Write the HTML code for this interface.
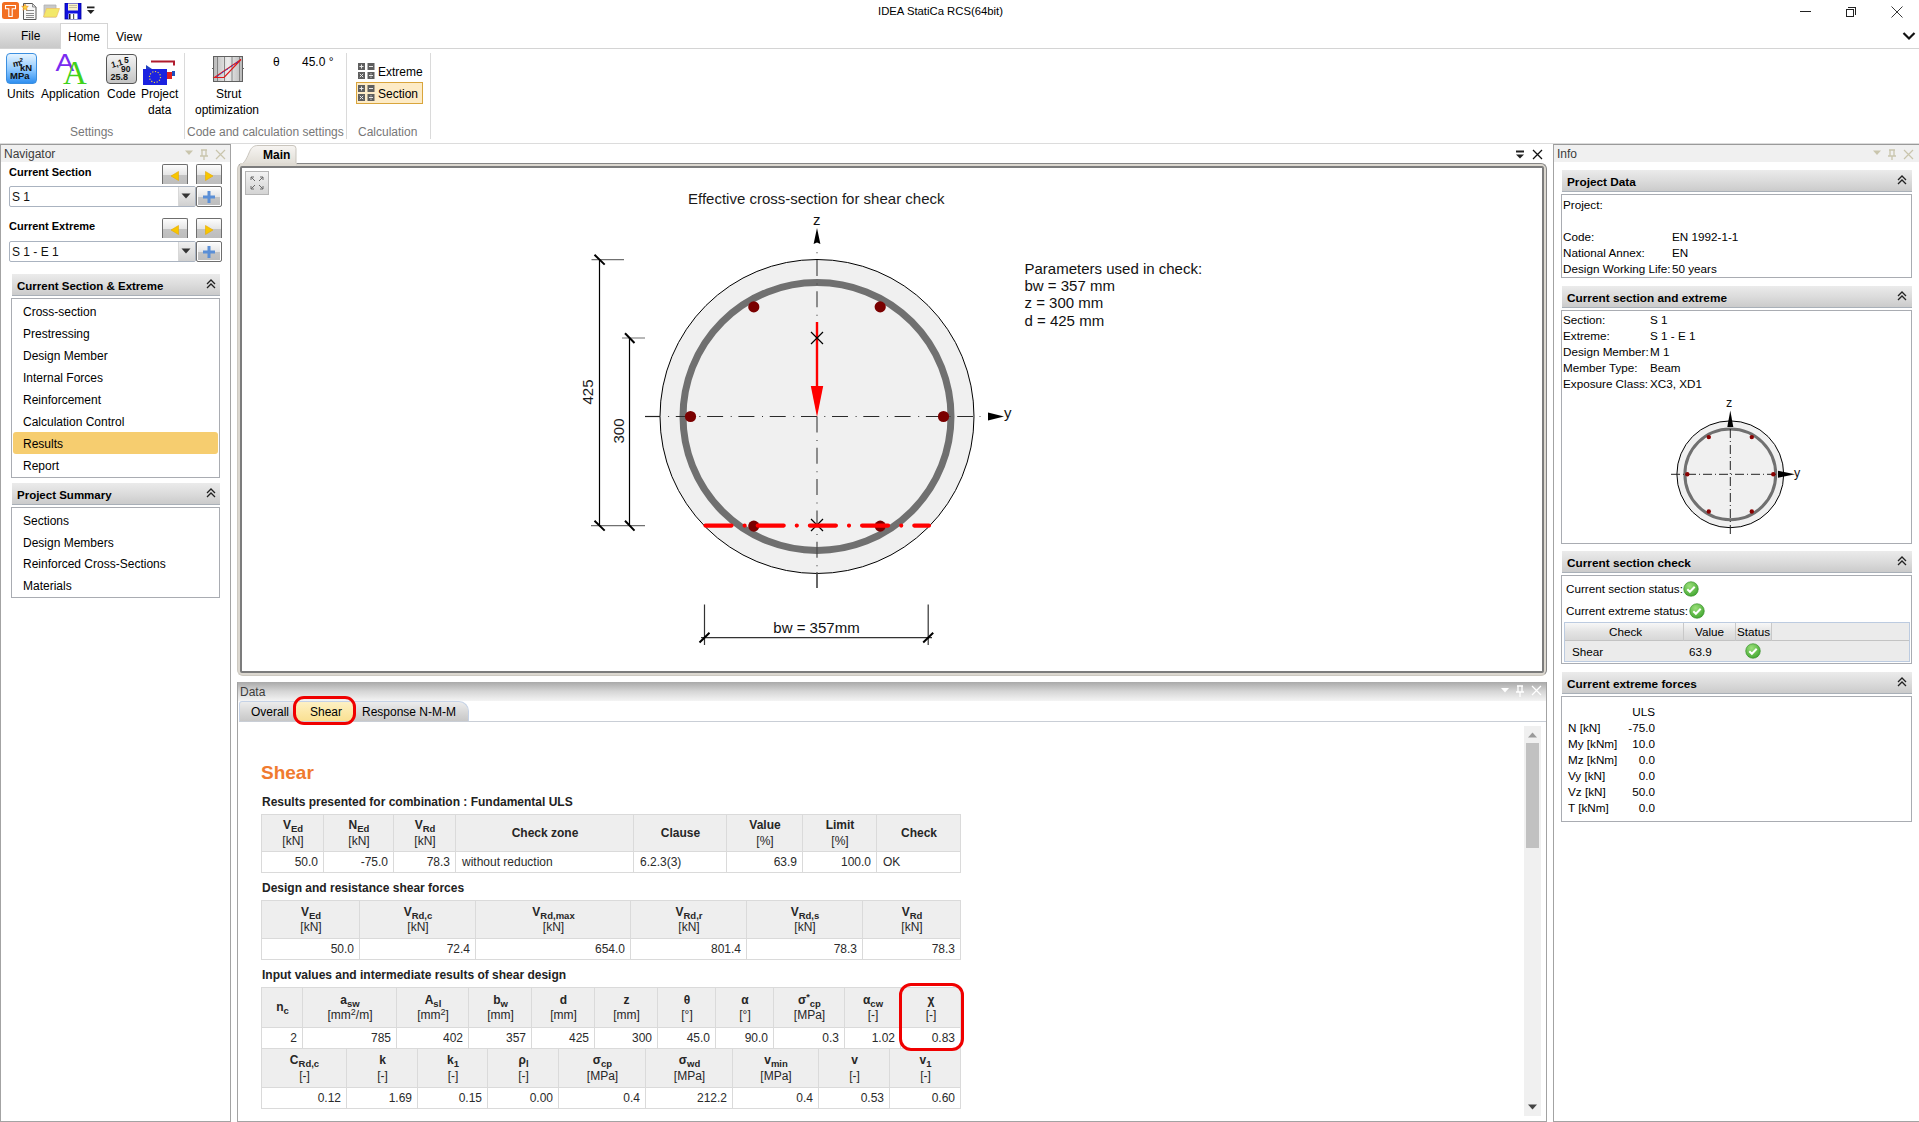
<!DOCTYPE html>
<html><head><meta charset="utf-8">
<style>
*{box-sizing:border-box}
html,body{margin:0;padding:0}
body{width:1919px;height:1122px;position:relative;overflow:hidden;background:#fff;font-family:"Liberation Sans",sans-serif;font-size:12px;color:#000}
.a{position:absolute}
.t{position:absolute;white-space:nowrap;line-height:16px}
.b{font-weight:bold}
.hdr{position:absolute;height:22px;background:linear-gradient(#ececec,#dadada 55%,#c8c8c8);border-bottom:2px solid #b9b9b9}
.hdr .t{top:3px;left:5px;font-weight:bold;font-size:11.5px}
.box{position:absolute;border:1px solid #a9acb2;border-radius:2px;background:#fff}
.rep{font-family:"Liberation Sans",sans-serif}
table.r{position:absolute;border-collapse:collapse;font-size:12px;color:#222}
table.r td{border:1px solid #d9d9d9;padding:0 4px;height:20px;text-align:right}
table.r tr.h td{background:#ededed;text-align:center;font-weight:bold;line-height:13px;height:37px;color:#111}
table.r tr.h td span{font-weight:normal}
sub{font-size:9.5px;vertical-align:-3px;line-height:0}
sup{font-size:9px;vertical-align:4px;line-height:0}
.hc{display:flex;flex-direction:column;justify-content:center;align-items:center;text-align:center;font-size:12px;line-height:15.5px;color:#262626}
.hc b{font-weight:bold}
.hc .u{font-weight:normal}
.vc{font-size:12px;line-height:23px;padding:0 6px;color:#2a2a2a;white-space:nowrap}
</style></head>
<body>
<!-- TITLE BAR -->
<div class="t" style="left:878px;top:3px;font-size:11.3px">IDEA StatiCa RCS(64bit)</div>

<!-- RIBBON TABS -->
<div class="a" style="left:0;top:23px;width:60px;height:25px;background:linear-gradient(#ececec,#c9c9c9)"></div>
<div class="t" style="left:21px;top:28px">File</div>
<div class="a" style="left:60px;top:23px;width:48px;height:26px;background:#fff;border:1px solid #d4d4d4;border-bottom:none"></div>
<div class="t" style="left:68px;top:29px">Home</div>
<div class="t" style="left:116px;top:29px">View</div>
<div class="a" style="left:0;top:48px;width:60px;height:1px;background:#d4d4d4"></div>
<div class="a" style="left:107px;top:48px;width:1812px;height:1px;background:#d4d4d4"></div>
<div class="a" style="left:0;top:143px;width:1919px;height:1px;background:#dcdcdc"></div>


<!-- quick access icons -->
<svg class="a" style="left:1px;top:1px" width="20" height="19"><rect x="1" y="1" width="17" height="17" rx="2.5" fill="#f26f22"/><path d="M4.5 4.5h10v3.2h-3.3v7.8h-3.4v-7.8h-3.3z" fill="none" stroke="#fff" stroke-width="1.1"/></svg>
<svg class="a" style="left:20px;top:2px" width="19" height="18"><path d="M3.5 1.5h9l3.5 3.5v12.5h-12.5z" fill="#f8f8f8" stroke="#555"/><path d="M12.5 1.5v3.5h3.5z" fill="#ddd" stroke="#777" stroke-width="0.8"/><path d="M6 8.5h8M6 11.5h8M6 13.5h8M6 15.5h8" stroke="#8a8a8a" stroke-width="1"/><path d="M5 2l1 2.2 2.3.2-1.8 1.5.6 2.3-2.1-1.3-2.1 1.3.6-2.3-1.8-1.5 2.3-.2z" fill="#f9d23a" stroke="#f08a20" stroke-width="0.6"/></svg>
<svg class="a" style="left:42px;top:4px" width="18" height="15"><path d="M2 1h12v12H2z" fill="#c8c8c8" stroke="#b0b0b0" stroke-width="0.8"/><path d="M4.5 4.5h13l-3 8.5H1.5z" fill="#f2e86a" stroke="#f0c060" stroke-width="0.7"/></svg>
<svg class="a" style="left:64px;top:3px" width="18" height="17"><rect x="1" y="0" width="16" height="16" fill="#1010e0" stroke="#0000a0" stroke-width="0.8"/><rect x="4" y="0.5" width="10" height="7" fill="#f7f0c8"/><path d="M5 2.5h8M5 4.5h8" stroke="#b8b090" stroke-width="0.8"/><rect x="4.5" y="10.5" width="9" height="5.5" fill="#fff"/><rect x="5" y="11" width="1.5" height="5" fill="#222"/><rect x="9" y="11" width="1.2" height="5" fill="#555"/></svg>
<svg class="a" style="left:86px;top:6px" width="10" height="8"><rect x="1" y="0.5" width="7.5" height="1.8" fill="#222"/><path d="M1 4h7.5l-3.75 4z" fill="#222"/></svg>
<!-- window controls -->
<div class="a" style="left:1800px;top:11px;width:11px;height:1px;background:#222"></div>
<div class="a" style="left:1846px;top:9px;width:8px;height:8px;border:1px solid #222"></div>
<div class="a" style="left:1848px;top:7px;width:8px;height:8px;border-top:1px solid #222;border-right:1px solid #222"></div>
<svg class="a" style="left:1891px;top:6px" width="12" height="12"><path d="M0.5 0.5L11.5 11.5M11.5 0.5L0.5 11.5" stroke="#222" stroke-width="0.9"/></svg>
<svg class="a" style="left:1902px;top:31px" width="14" height="10"><path d="M1.5 2L7 7.5L12.5 2" fill="none" stroke="#111" stroke-width="2.2"/></svg>

<!-- ribbon icons -->
<div class="a" style="left:6px;top:53px;width:31px;height:31px;border-radius:4px;border:1px solid #3b8fe0;background:linear-gradient(#e6f4ff,#8cc8ff 55%,#2f8ff0)"></div>
<svg class="a" style="left:6px;top:53px" width="31" height="31"><g font-family="Liberation Sans, sans-serif" font-weight="bold" fill="#111"><text x="7" y="14" font-size="9" transform="rotate(-12 9 12)">m</text><text x="13.5" y="8.5" font-size="6">2</text><text x="14" y="18" font-size="9.5">kN</text><text x="4" y="26" font-size="9.5">MPa</text></g></svg>
<svg class="a" style="left:54px;top:52px" width="36" height="34"><text x="1.5" y="22" font-family="Liberation Sans, sans-serif" font-size="28" fill="#7a2cf0" transform="scale(1 0.85)" >A</text><text x="9" y="32" font-family="Liberation Serif, serif" font-size="33" fill="#3fd21a">A</text></svg>

<div class="a" style="left:106px;top:54px;width:31px;height:30px;border-radius:4px;border:1px solid #555;background:linear-gradient(#f4f4f4,#c4c4c4)"></div>
<svg class="a" style="left:106px;top:54px" width="31" height="30"><g font-family="Liberation Sans, sans-serif" font-weight="bold" fill="#111"><text x="5" y="13" font-size="8.5" transform="rotate(-15 9 10)">1,1</text><text x="18" y="9" font-size="8.5">5</text><text x="15" y="18" font-size="8.5">90</text><text x="4.5" y="26" font-size="9">25.8</text></g></svg>
<svg class="a" style="left:142px;top:60px" width="35" height="26"><path d="M9 0.5h24v5h-2v-3H9z" fill="#b01c2e"/><path d="M4 5l6 4H4z" fill="#2040c0"/><rect x="1" y="9" width="24" height="16" fill="#1b22e0"/><circle cx="13" cy="17" r="5.5" fill="none" stroke="#e8d040" stroke-dasharray="1.2 1.6" stroke-width="1.2"/><rect x="25" y="12" width="5" height="7" fill="#e02020"/><rect x="30" y="11" width="3" height="5" fill="#2050c0"/></svg>
<div class="t" style="left:7px;top:86px">Units</div>
<div class="t" style="left:41px;top:86px">Application</div>
<div class="t" style="left:107px;top:86px">Code</div>
<div class="t" style="left:141px;top:86px">Project</div>
<div class="t" style="left:148px;top:102px">data</div>
<div class="a" style="left:184px;top:53px;width:1px;height:86px;background:#dadada"></div>
<svg class="a" style="left:211px;top:55px" width="34" height="29"><defs><linearGradient id="sg" x1="0" y1="0" x2="1" y2="0"><stop offset="0" stop-color="#b8b8b8"/><stop offset="0.5" stop-color="#ececec"/><stop offset="1" stop-color="#b8b8b8"/></linearGradient></defs><rect x="2.5" y="1.5" width="29" height="25" fill="url(#sg)" stroke="#606060"/><path d="M6.5 2v24M13.5 2v24M21 2v24M28.5 2v24" stroke="#7a7a7a" stroke-width="0.9"/><path d="M1 13.5h2M31 13.5h2" stroke="#666"/><path d="M3.5 22.5L30 4.5L13 22.5z" fill="none" stroke="#e01818" stroke-width="1.2"/><path d="M6 21.5L28 6" stroke="#2040e0" stroke-width="1" stroke-dasharray="2 1.5 0.8 1.5"/></svg>
<div class="t" style="left:216px;top:86px">Strut</div>
<div class="t" style="left:195px;top:102px">optimization</div>
<div class="t" style="left:273px;top:54px">θ</div>
<div class="t" style="left:302px;top:54px">45.0 °</div>
<div class="a" style="left:346px;top:53px;width:1px;height:86px;background:#dadada"></div>
<svg class="a" style="left:358px;top:63px" width="17" height="16"><rect x="0" y="0" width="7" height="7" fill="#5e5e5e"/><rect x="9.5" y="0" width="7" height="7" fill="#5e5e5e"/><rect x="0" y="9" width="7" height="7" fill="#5e5e5e"/><rect x="9.5" y="9" width="7" height="7" fill="#5e5e5e"/><path d="M1.5 3.5h4M3.5 1.5v4M11 3.5h4M1.8 10.8l3.4 3.4M5.2 10.8l-3.4 3.4M11 12.5h4" stroke="#e8e8e8" stroke-width="1"/><circle cx="13" cy="10.8" r="0.6" fill="#e8e8e8"/><circle cx="13" cy="14.2" r="0.6" fill="#e8e8e8"/></svg>
<div class="t" style="left:378px;top:64px">Extreme</div>
<div class="a" style="left:356px;top:82px;width:67px;height:22px;background:#fdebc6;border:1px solid #d9a53c"></div>
<svg class="a" style="left:358px;top:85px" width="17" height="16"><rect x="0" y="0" width="7" height="7" fill="#5e5e5e"/><rect x="9.5" y="0" width="7" height="7" fill="#5e5e5e"/><rect x="0" y="9" width="7" height="7" fill="#5e5e5e"/><rect x="9.5" y="9" width="7" height="7" fill="#5e5e5e"/><path d="M1.5 3.5h4M3.5 1.5v4M11 3.5h4M1.8 10.8l3.4 3.4M5.2 10.8l-3.4 3.4M11 12.5h4" stroke="#e8e8e8" stroke-width="1"/><circle cx="13" cy="10.8" r="0.6" fill="#e8e8e8"/><circle cx="13" cy="14.2" r="0.6" fill="#e8e8e8"/></svg>
<div class="t" style="left:378px;top:86px">Section</div>
<div class="a" style="left:430px;top:53px;width:1px;height:86px;background:#dadada"></div>
<div class="t" style="left:70px;top:124px;color:#777">Settings</div>
<div class="t" style="left:187px;top:124px;color:#777">Code and calculation settings</div>
<div class="t" style="left:358px;top:124px;color:#777">Calculation</div>

<!-- PANELS -->

<!-- DATA PANEL -->
<div class="a" style="left:237px;top:682px;width:310px;height:440px;border-left:1px solid #a3a3a3"></div>
<div class="a" style="left:237px;top:682px;width:1310px;height:440px;border:1px solid #a3a3a3;border-top:none;background:#fff"></div>
<div class="a" style="left:238px;top:682px;width:1308px;height:19px;background:linear-gradient(#a9a9a9,#d6d6d6 50%,#f4f4f4)"></div>
<div class="t" style="left:240px;top:684px;color:#3c3c3c">Data</div>
<svg class="a" style="left:1500px;top:685px" width="44" height="13"><path d="M1 3h8l-4 4.5z" fill="#fff"/><path d="M17 1h6M18 1v6M22 1v6M16 7h8M20 7v5" stroke="#fff" stroke-width="1.3" fill="none"/><path d="M32 1l9 9M41 1l-9 9" stroke="#fff" stroke-width="1.2"/></svg>
<div class="a" style="left:239px;top:701px;width:230px;height:21px;border:1px solid #c5d2e6;border-bottom:none;border-radius:3px 10px 0 0;background:linear-gradient(#ececec,#d4d4d4 60%,#c6c6c6)"></div>
<div class="a" style="left:296px;top:702px;width:57px;height:20px;background:linear-gradient(#fdf0c4,#fce8a8 50%,#f9df90)"></div>
<div class="a" style="left:239px;top:721px;width:1307px;height:1px;background:#c9ced6"></div>
<div class="t" style="left:251px;top:704px">Overall</div>
<div class="t" style="left:310px;top:704px">Shear</div>
<div class="t" style="left:362px;top:704px">Response N-M-M</div>
<div class="a" style="left:293px;top:696px;width:63px;height:29px;border:3px solid #f00000;border-radius:11px"></div>
<!-- scrollbar -->
<div class="a" style="left:1524px;top:726px;width:17px;height:390px;background:#f0f0f0"></div>
<div class="a" style="left:1526px;top:743px;width:13px;height:105px;background:#c1c1c1"></div>
<svg class="a" style="left:1527px;top:731px" width="11" height="8"><path d="M1 6.5h9l-4.5-5z" fill="#9a9a9a"/></svg>
<svg class="a" style="left:1527px;top:1103px" width="11" height="8"><path d="M1 1.5h9l-4.5 5z" fill="#444"/></svg>
<!-- report -->
<div class="t b" style="left:261px;top:762px;font-size:19px;line-height:22px;color:#f07b2f">Shear</div>
<div class="t b" style="left:262px;top:794px;color:#222">Results presented for combination : Fundamental ULS</div>
<div class="t b" style="left:262px;top:880px;color:#222">Design and resistance shear forces</div>
<div class="t b" style="left:262px;top:967px;color:#222">Input values and intermediate results of shear design</div>
<div class="a" style="left:262px;top:814px;width:699px;height:37px;background:#eeeeee"></div>
<div class="a" style="left:261px;top:814px;width:1px;height:59px;background:#dadada"></div>
<div class="a" style="left:323px;top:814px;width:1px;height:59px;background:#dadada"></div>
<div class="a" style="left:393px;top:814px;width:1px;height:59px;background:#dadada"></div>
<div class="a" style="left:455px;top:814px;width:1px;height:59px;background:#dadada"></div>
<div class="a" style="left:633px;top:814px;width:1px;height:59px;background:#dadada"></div>
<div class="a" style="left:726px;top:814px;width:1px;height:59px;background:#dadada"></div>
<div class="a" style="left:802px;top:814px;width:1px;height:59px;background:#dadada"></div>
<div class="a" style="left:876px;top:814px;width:1px;height:59px;background:#dadada"></div>
<div class="a" style="left:960px;top:814px;width:1px;height:59px;background:#dadada"></div>
<div class="a" style="left:261px;top:814px;width:700px;height:1px;background:#dadada"></div>
<div class="a" style="left:261px;top:851px;width:700px;height:1px;background:#dadada"></div>
<div class="a" style="left:261px;top:872px;width:700px;height:1px;background:#dadada"></div>
<div class="a hc" style="left:262px;top:815px;width:62px;height:37px"><div><b>V</b><sub class="b">Ed</sub></div><div class="u">[kN]</div></div>
<div class="a hc" style="left:324px;top:815px;width:70px;height:37px"><div><b>N</b><sub class="b">Ed</sub></div><div class="u">[kN]</div></div>
<div class="a hc" style="left:394px;top:815px;width:62px;height:37px"><div><b>V</b><sub class="b">Rd</sub></div><div class="u">[kN]</div></div>
<div class="a hc" style="left:456px;top:815px;width:178px;height:37px"><div><b>Check zone</b></div></div>
<div class="a hc" style="left:634px;top:815px;width:93px;height:37px"><div><b>Clause</b></div></div>
<div class="a hc" style="left:727px;top:815px;width:76px;height:37px"><div><b>Value</b></div><div class="u">[%]</div></div>
<div class="a hc" style="left:803px;top:815px;width:74px;height:37px"><div><b>Limit</b></div><div class="u">[%]</div></div>
<div class="a hc" style="left:877px;top:815px;width:84px;height:37px"><div><b>Check</b></div></div>
<div class="a vc" style="left:262px;top:851px;width:62px;height:21px;text-align:right">50.0</div>
<div class="a vc" style="left:324px;top:851px;width:70px;height:21px;text-align:right">-75.0</div>
<div class="a vc" style="left:394px;top:851px;width:62px;height:21px;text-align:right">78.3</div>
<div class="a vc" style="left:456px;top:851px;width:178px;height:21px;text-align:left">without reduction</div>
<div class="a vc" style="left:634px;top:851px;width:93px;height:21px;text-align:left">6.2.3(3)</div>
<div class="a vc" style="left:727px;top:851px;width:76px;height:21px;text-align:right">63.9</div>
<div class="a vc" style="left:803px;top:851px;width:74px;height:21px;text-align:right">100.0</div>
<div class="a vc" style="left:877px;top:851px;width:84px;height:21px;text-align:left">OK</div>
<div class="a" style="left:262px;top:900px;width:699px;height:38px;background:#eeeeee"></div>
<div class="a" style="left:261px;top:900px;width:1px;height:60px;background:#dadada"></div>
<div class="a" style="left:359px;top:900px;width:1px;height:60px;background:#dadada"></div>
<div class="a" style="left:475px;top:900px;width:1px;height:60px;background:#dadada"></div>
<div class="a" style="left:630px;top:900px;width:1px;height:60px;background:#dadada"></div>
<div class="a" style="left:746px;top:900px;width:1px;height:60px;background:#dadada"></div>
<div class="a" style="left:862px;top:900px;width:1px;height:60px;background:#dadada"></div>
<div class="a" style="left:960px;top:900px;width:1px;height:60px;background:#dadada"></div>
<div class="a" style="left:261px;top:900px;width:700px;height:1px;background:#dadada"></div>
<div class="a" style="left:261px;top:938px;width:700px;height:1px;background:#dadada"></div>
<div class="a" style="left:261px;top:959px;width:700px;height:1px;background:#dadada"></div>
<div class="a hc" style="left:262px;top:901px;width:98px;height:38px"><div><b>V</b><sub class="b">Ed</sub></div><div class="u">[kN]</div></div>
<div class="a hc" style="left:360px;top:901px;width:116px;height:38px"><div><b>V</b><sub class="b">Rd,c</sub></div><div class="u">[kN]</div></div>
<div class="a hc" style="left:476px;top:901px;width:155px;height:38px"><div><b>V</b><sub class="b">Rd,max</sub></div><div class="u">[kN]</div></div>
<div class="a hc" style="left:631px;top:901px;width:116px;height:38px"><div><b>V</b><sub class="b">Rd,r</sub></div><div class="u">[kN]</div></div>
<div class="a hc" style="left:747px;top:901px;width:116px;height:38px"><div><b>V</b><sub class="b">Rd,s</sub></div><div class="u">[kN]</div></div>
<div class="a hc" style="left:863px;top:901px;width:98px;height:38px"><div><b>V</b><sub class="b">Rd</sub></div><div class="u">[kN]</div></div>
<div class="a vc" style="left:262px;top:938px;width:98px;height:21px;text-align:right">50.0</div>
<div class="a vc" style="left:360px;top:938px;width:116px;height:21px;text-align:right">72.4</div>
<div class="a vc" style="left:476px;top:938px;width:155px;height:21px;text-align:right">654.0</div>
<div class="a vc" style="left:631px;top:938px;width:116px;height:21px;text-align:right">801.4</div>
<div class="a vc" style="left:747px;top:938px;width:116px;height:21px;text-align:right">78.3</div>
<div class="a vc" style="left:863px;top:938px;width:98px;height:21px;text-align:right">78.3</div>
<div class="a" style="left:262px;top:987px;width:699px;height:40px;background:#eeeeee"></div>
<div class="a" style="left:261px;top:987px;width:1px;height:62px;background:#dadada"></div>
<div class="a" style="left:302px;top:987px;width:1px;height:62px;background:#dadada"></div>
<div class="a" style="left:396px;top:987px;width:1px;height:62px;background:#dadada"></div>
<div class="a" style="left:468px;top:987px;width:1px;height:62px;background:#dadada"></div>
<div class="a" style="left:531px;top:987px;width:1px;height:62px;background:#dadada"></div>
<div class="a" style="left:594px;top:987px;width:1px;height:62px;background:#dadada"></div>
<div class="a" style="left:657px;top:987px;width:1px;height:62px;background:#dadada"></div>
<div class="a" style="left:715px;top:987px;width:1px;height:62px;background:#dadada"></div>
<div class="a" style="left:773px;top:987px;width:1px;height:62px;background:#dadada"></div>
<div class="a" style="left:844px;top:987px;width:1px;height:62px;background:#dadada"></div>
<div class="a" style="left:900px;top:987px;width:1px;height:62px;background:#dadada"></div>
<div class="a" style="left:960px;top:987px;width:1px;height:62px;background:#dadada"></div>
<div class="a" style="left:261px;top:987px;width:700px;height:1px;background:#dadada"></div>
<div class="a" style="left:261px;top:1027px;width:700px;height:1px;background:#dadada"></div>
<div class="a" style="left:261px;top:1048px;width:700px;height:1px;background:#dadada"></div>
<div class="a hc" style="left:262px;top:988px;width:41px;height:40px"><div><b>n</b><sub class="b">c</sub></div></div>
<div class="a hc" style="left:303px;top:988px;width:94px;height:40px"><div><b>a</b><sub class="b">sw</sub></div><div class="u">[mm<sup>2</sup>/m]</div></div>
<div class="a hc" style="left:397px;top:988px;width:72px;height:40px"><div><b>A</b><sub class="b">sl</sub></div><div class="u">[mm<sup>2</sup>]</div></div>
<div class="a hc" style="left:469px;top:988px;width:63px;height:40px"><div><b>b</b><sub class="b">w</sub></div><div class="u">[mm]</div></div>
<div class="a hc" style="left:532px;top:988px;width:63px;height:40px"><div><b>d</b></div><div class="u">[mm]</div></div>
<div class="a hc" style="left:595px;top:988px;width:63px;height:40px"><div><b>z</b></div><div class="u">[mm]</div></div>
<div class="a hc" style="left:658px;top:988px;width:58px;height:40px"><div><b>θ</b></div><div class="u">[°]</div></div>
<div class="a hc" style="left:716px;top:988px;width:58px;height:40px"><div><b>α</b></div><div class="u">[°]</div></div>
<div class="a hc" style="left:774px;top:988px;width:71px;height:40px"><div><b>σ</b><sup class="b">*</sup><sub class="b">cp</sub></div><div class="u">[MPa]</div></div>
<div class="a hc" style="left:845px;top:988px;width:56px;height:40px"><div><b>α</b><sub class="b">cw</sub></div><div class="u">[-]</div></div>
<div class="a hc" style="left:901px;top:988px;width:60px;height:40px"><div><b>χ</b></div><div class="u">[-]</div></div>
<div class="a vc" style="left:262px;top:1027px;width:41px;height:21px;text-align:right">2</div>
<div class="a vc" style="left:303px;top:1027px;width:94px;height:21px;text-align:right">785</div>
<div class="a vc" style="left:397px;top:1027px;width:72px;height:21px;text-align:right">402</div>
<div class="a vc" style="left:469px;top:1027px;width:63px;height:21px;text-align:right">357</div>
<div class="a vc" style="left:532px;top:1027px;width:63px;height:21px;text-align:right">425</div>
<div class="a vc" style="left:595px;top:1027px;width:63px;height:21px;text-align:right">300</div>
<div class="a vc" style="left:658px;top:1027px;width:58px;height:21px;text-align:right">45.0</div>
<div class="a vc" style="left:716px;top:1027px;width:58px;height:21px;text-align:right">90.0</div>
<div class="a vc" style="left:774px;top:1027px;width:71px;height:21px;text-align:right">0.3</div>
<div class="a vc" style="left:845px;top:1027px;width:56px;height:21px;text-align:right">1.02</div>
<div class="a vc" style="left:901px;top:1027px;width:60px;height:21px;text-align:right">0.83</div>
<div class="a" style="left:262px;top:1048px;width:699px;height:39px;background:#eeeeee"></div>
<div class="a" style="left:261px;top:1048px;width:1px;height:61px;background:#dadada"></div>
<div class="a" style="left:346px;top:1048px;width:1px;height:61px;background:#dadada"></div>
<div class="a" style="left:417px;top:1048px;width:1px;height:61px;background:#dadada"></div>
<div class="a" style="left:487px;top:1048px;width:1px;height:61px;background:#dadada"></div>
<div class="a" style="left:558px;top:1048px;width:1px;height:61px;background:#dadada"></div>
<div class="a" style="left:645px;top:1048px;width:1px;height:61px;background:#dadada"></div>
<div class="a" style="left:732px;top:1048px;width:1px;height:61px;background:#dadada"></div>
<div class="a" style="left:818px;top:1048px;width:1px;height:61px;background:#dadada"></div>
<div class="a" style="left:889px;top:1048px;width:1px;height:61px;background:#dadada"></div>
<div class="a" style="left:960px;top:1048px;width:1px;height:61px;background:#dadada"></div>
<div class="a" style="left:261px;top:1048px;width:700px;height:1px;background:#dadada"></div>
<div class="a" style="left:261px;top:1087px;width:700px;height:1px;background:#dadada"></div>
<div class="a" style="left:261px;top:1108px;width:700px;height:1px;background:#dadada"></div>
<div class="a hc" style="left:262px;top:1049px;width:85px;height:39px"><div><b>C</b><sub class="b">Rd,c</sub></div><div class="u">[-]</div></div>
<div class="a hc" style="left:347px;top:1049px;width:71px;height:39px"><div><b>k</b></div><div class="u">[-]</div></div>
<div class="a hc" style="left:418px;top:1049px;width:70px;height:39px"><div><b>k</b><sub class="b">1</sub></div><div class="u">[-]</div></div>
<div class="a hc" style="left:488px;top:1049px;width:71px;height:39px"><div><b>ρ</b><sub class="b">l</sub></div><div class="u">[-]</div></div>
<div class="a hc" style="left:559px;top:1049px;width:87px;height:39px"><div><b>σ</b><sub class="b">cp</sub></div><div class="u">[MPa]</div></div>
<div class="a hc" style="left:646px;top:1049px;width:87px;height:39px"><div><b>σ</b><sub class="b">wd</sub></div><div class="u">[MPa]</div></div>
<div class="a hc" style="left:733px;top:1049px;width:86px;height:39px"><div><b>v</b><sub class="b">min</sub></div><div class="u">[MPa]</div></div>
<div class="a hc" style="left:819px;top:1049px;width:71px;height:39px"><div><b>v</b></div><div class="u">[-]</div></div>
<div class="a hc" style="left:890px;top:1049px;width:71px;height:39px"><div><b>v</b><sub class="b">1</sub></div><div class="u">[-]</div></div>
<div class="a vc" style="left:262px;top:1087px;width:85px;height:21px;text-align:right">0.12</div>
<div class="a vc" style="left:347px;top:1087px;width:71px;height:21px;text-align:right">1.69</div>
<div class="a vc" style="left:418px;top:1087px;width:70px;height:21px;text-align:right">0.15</div>
<div class="a vc" style="left:488px;top:1087px;width:71px;height:21px;text-align:right">0.00</div>
<div class="a vc" style="left:559px;top:1087px;width:87px;height:21px;text-align:right">0.4</div>
<div class="a vc" style="left:646px;top:1087px;width:87px;height:21px;text-align:right">212.2</div>
<div class="a vc" style="left:733px;top:1087px;width:86px;height:21px;text-align:right">0.4</div>
<div class="a vc" style="left:819px;top:1087px;width:71px;height:21px;text-align:right">0.53</div>
<div class="a vc" style="left:890px;top:1087px;width:71px;height:21px;text-align:right">0.60</div>
<div class="a" style="left:899px;top:983px;width:65px;height:68px;border:3px solid #f00000;border-radius:12px"></div>
<!-- MAIN PANEL -->


<svg class="a" style="left:1514px;top:149px" width="30" height="12"><rect x="2" y="1.5" width="8" height="2" fill="#222"/><path d="M2 5.5h8l-4 4z" fill="#222"/><path d="M19 1l9 9M28 1l-9 9" stroke="#111" stroke-width="1.3"/></svg>
<div class="a" style="left:237px;top:163px;width:1310px;height:513px;background:#dcd8d0;border-radius:6px;border-top:1px solid #868686;border-right:1px solid #868686;border-left:1px solid #cdc9c1;border-bottom:1px solid #cdc9c1"></div>
<div class="a" style="left:240px;top:166px;width:1304px;height:507px;background:#fff;border:2px solid #7c7c7c;border-radius:2px"></div>
<svg class="a" style="left:236px;top:144px" width="66" height="24"><path d="M2 22 C8 20 10 16 13 9 C15 4 17 1.5 22 1.5 H57 Q60 1.5 60 4.5 V22" fill="url(#tabg)" stroke="#c9c5bd" stroke-width="1"/><rect x="4" y="19" width="56.5" height="3" fill="#dedad2"/><defs><linearGradient id="tabg" x1="0" y1="0" x2="0" y2="1"><stop offset="0" stop-color="#f7f5f2"/><stop offset="1" stop-color="#dedad2"/></linearGradient></defs></svg>
<div class="t b" style="left:263px;top:147px;font-size:12px">Main</div>
<div class="a" style="left:245px;top:171px;width:24px;height:24px;border:1px solid #b5b5b5;background:linear-gradient(#f2f2f2,#d4d4d4)"></div>
<svg class="a" style="left:245px;top:171px" width="24" height="24"><g stroke="#6a6a6a" stroke-width="1" fill="none"><path d="M6 6l4 4M6 6v3M6 6h3"/><path d="M18 6l-4 4M18 6v3M18 6h-3"/><path d="M6 18l4-4M6 18v-3M6 18h3"/><path d="M18 18l-4-4M18 18v-3M18 18h-3"/></g></svg>
<svg class="a" style="left:242px;top:168px" width="1300" height="503" viewBox="242 168 1300 503">
<text x="688" y="204" font-family="Liberation Sans, sans-serif" font-size="15" fill="#1a1a1a">Effective cross-section for shear check</text>
<text x="813" y="225" font-family="Liberation Sans, sans-serif" font-size="15" fill="#111">z</text>
<circle cx="817" cy="416.5" r="157" fill="#f0f0f0" stroke="#000" stroke-width="1"/>
<circle cx="817" cy="416.5" r="134" fill="none" stroke="#707070" stroke-width="7"/>
<path d="M645 416.5H660" stroke="#222" stroke-width="1.2"/>
<path d="M801.0 416.5H817.0 M793.3 416.5h1 M769.7 416.5H785.7 M762.0 416.5h1 M738.4 416.5H754.4 M730.7 416.5h1 M707.1 416.5H723.1 M699.4 416.5h1 M675.8 416.5H691.8 M668.1 416.5h1 M824.3 416.5h1 M832.0 416.5h16 M855.6 416.5h1 M863.3 416.5h16 M886.9 416.5h1 M894.6 416.5h16 M918.2 416.5h1 M925.9 416.5h16 M949.5 416.5h1 M957.2 416.5h16" stroke="#2a2a2a" stroke-width="1.2" fill="none"/>
<path d="M817 252.2v1 M817 260.0V276.0 M817 283.5v1 M817 291.3V307.3 M817 314.8v1 M817 322.6V338.6 M817 346.1v1 M817 353.9V369.9 M817 377.4v1 M817 385.2V401.2 M817 408.7v1 M817 416.5V432.5 M817 440.0v1 M817 447.8V463.8 M817 471.3v1 M817 479.1V495.1 M817 502.6v1 M817 510.4V526.4 M817 533.9v1 M817 541.7V557.7 M817 565.2v1 M817 573.0V588.0" stroke="#4a4a4a" stroke-width="1.2" fill="none"/>
<path d="M817 572V588" stroke="#4a4a4a" stroke-width="1.2"/>
<path d="M817 228L813.6 244L817 242.5L820.4 244Z" fill="#000"/>
<path d="M1004 416.5L988 412.5L988 420.5Z" fill="#000"/><path d="M979.5 416.5h1" stroke="#555" stroke-width="1.2"/>
<text x="1004" y="418" font-family="Liberation Sans, sans-serif" font-size="15" fill="#111">y</text>
<circle cx="943.5" cy="416.5" r="5.6" fill="#7a0000"/>
<circle cx="880.2" cy="306.9" r="5.6" fill="#7a0000"/>
<circle cx="753.8" cy="306.9" r="5.6" fill="#7a0000"/>
<circle cx="690.5" cy="416.5" r="5.6" fill="#7a0000"/>
<circle cx="753.8" cy="526.1" r="5.6" fill="#7a0000"/>
<circle cx="880.2" cy="526.1" r="5.6" fill="#7a0000"/>
<path d="M817 322V390" stroke="#ff0000" stroke-width="2.4"/>
<path d="M810.8 386H823.2L817 417Z" fill="#ff0000"/>
<path d="M811 332L823 344M823 332L811 344" stroke="#000" stroke-width="1.2"/>
<path d="M811 519L823 531M823 519L811 531" stroke="#000" stroke-width="1.2"/>
<path d="M705.5 525.6H929" stroke="#ff0000" stroke-width="4.2" stroke-linecap="round" stroke-dasharray="26 13.1 0.001 13.1"/>
<path d="M599.5 260V525.5M629.5 338V525.5" stroke="#000" stroke-width="1.2"/>
<path d="M591.5 259.7H624M622 338H645M591 525.6H645" stroke="#707070" stroke-width="1.2"/>
<path d="M594.5 254.8L604.7 264.6M625 333.2L634.5 343M594.5 520.8L604.7 530.6M625 520.8L634.5 530.6" stroke="#000" stroke-width="2"/>
<text transform="translate(593 392) rotate(-90)" text-anchor="middle" font-family="Liberation Sans, sans-serif" font-size="15" fill="#1a1a1a">425</text>
<text transform="translate(624 431) rotate(-90)" text-anchor="middle" font-family="Liberation Sans, sans-serif" font-size="15" fill="#1a1a1a">300</text>
<path d="M704.5 604.5V645M928.2 604.5V645" stroke="#333" stroke-width="1.2"/>
<path d="M701 637.6H932" stroke="#333" stroke-width="1.2"/>
<path d="M699.5 642.5L709.5 632.7M923.2 642.5L933.2 632.7" stroke="#000" stroke-width="2"/>
<text x="816.5" y="633" text-anchor="middle" font-family="Liberation Sans, sans-serif" font-size="15" fill="#111">bw = 357mm</text>
<text x="1024.5" y="273.5" font-family="Liberation Sans, sans-serif" font-size="15" fill="#111">Parameters used in check:</text>
<text x="1024.5" y="290.9" font-family="Liberation Sans, sans-serif" font-size="15" fill="#111">bw = 357 mm</text>
<text x="1024.5" y="308.3" font-family="Liberation Sans, sans-serif" font-size="15" fill="#111">z = 300 mm</text>
<text x="1024.5" y="325.7" font-family="Liberation Sans, sans-serif" font-size="15" fill="#111">d = 425 mm</text>
</svg>


<!-- NAVIGATOR -->
<div class="a" style="left:0;top:144px;width:231px;height:978px;border:1px solid #a3a3a3;border-top:1px solid #9a9a9a"></div>
<div class="a" style="left:1px;top:145px;width:229px;height:17px;background:#f0f0f0"></div>
<div class="t" style="left:4px;top:146px;color:#3c3c3c">Navigator</div>
<svg class="a" style="left:184px;top:149px" width="44" height="11"><path d="M1 1.5h8l-4 4.5z" fill="#c9c5ad"/><path d="M17 1h6M18 1v6M22 1v6M16 7h8M20 7v4" stroke="#c9c5ad" stroke-width="1.3" fill="none"/><path d="M32 1l9 9M41 1l-9 9" stroke="#c9c5ad" stroke-width="1.2"/></svg>
<div class="t b" style="left:9px;top:164px;font-size:11px">Current Section</div>
<div class="t b" style="left:9px;top:218px;font-size:11px">Current Extreme</div>
<div class="a" style="left:162px;top:164px;width:26px;height:20px;border:1px solid #6e6e6e;border-bottom:none;border-radius:2px 2px 0 0;background:linear-gradient(#fdfdfd,#e6e6e6 50%,#c4c4c4 51%,#bdbdbd)"></div><svg class="a" style="left:162px;top:164px" width="26" height="20"><path d="M16.5 7.5v9l-7.5-4.5z" fill="#f7c600" stroke="#e8a800" stroke-width="0.6"/></svg>
<div class="a" style="left:196px;top:164px;width:26px;height:20px;border:1px solid #6e6e6e;border-bottom:none;border-radius:2px 2px 0 0;background:linear-gradient(#fdfdfd,#e6e6e6 50%,#c4c4c4 51%,#bdbdbd)"></div><svg class="a" style="left:196px;top:164px" width="26" height="20"><path d="M9.5 7.5v9l7.5-4.5z" fill="#f7c600" stroke="#e8a800" stroke-width="0.6"/></svg>
<div class="a" style="left:9px;top:186px;width:187px;height:21px;border:1px solid #aab3c0;border-radius:2px;background:#fff"></div><div class="a" style="left:178px;top:187px;width:17px;height:19px;background:linear-gradient(#f0f0f0,#d0d0d0);border-left:1px solid #d8d8d8"></div><svg class="a" style="left:181px;top:193px" width="10" height="6"><path d="M0.5 0.5h9l-4.5 5z" fill="#333"/></svg><div class="t" style="left:12px;top:189px;color:#111">S 1</div>
<div class="a" style="left:196px;top:186px;width:26px;height:21px;border:1px solid #6e6e6e;border-radius:2px;background:linear-gradient(#fdfdfd,#e6e6e6 50%,#c4c4c4 51%,#bdbdbd);box-shadow:inset 0 0 0 1px #fff"></div><svg class="a" style="left:196px;top:186px" width="26" height="21"><path d="M13 5v12M7 11h12" stroke="#5b8fd6" stroke-width="3"/></svg>
<div class="a" style="left:162px;top:218px;width:26px;height:20px;border:1px solid #6e6e6e;border-bottom:none;border-radius:2px 2px 0 0;background:linear-gradient(#fdfdfd,#e6e6e6 50%,#c4c4c4 51%,#bdbdbd)"></div><svg class="a" style="left:162px;top:218px" width="26" height="20"><path d="M16.5 7.5v9l-7.5-4.5z" fill="#f7c600" stroke="#e8a800" stroke-width="0.6"/></svg>
<div class="a" style="left:196px;top:218px;width:26px;height:20px;border:1px solid #6e6e6e;border-bottom:none;border-radius:2px 2px 0 0;background:linear-gradient(#fdfdfd,#e6e6e6 50%,#c4c4c4 51%,#bdbdbd)"></div><svg class="a" style="left:196px;top:218px" width="26" height="20"><path d="M9.5 7.5v9l7.5-4.5z" fill="#f7c600" stroke="#e8a800" stroke-width="0.6"/></svg>
<div class="a" style="left:9px;top:241px;width:187px;height:21px;border:1px solid #aab3c0;border-radius:2px;background:#fff"></div><div class="a" style="left:178px;top:242px;width:17px;height:19px;background:linear-gradient(#f0f0f0,#d0d0d0);border-left:1px solid #d8d8d8"></div><svg class="a" style="left:181px;top:248px" width="10" height="6"><path d="M0.5 0.5h9l-4.5 5z" fill="#333"/></svg><div class="t" style="left:12px;top:244px;color:#111">S 1 - E 1</div>
<div class="a" style="left:196px;top:241px;width:26px;height:21px;border:1px solid #6e6e6e;border-radius:2px;background:linear-gradient(#fdfdfd,#e6e6e6 50%,#c4c4c4 51%,#bdbdbd);box-shadow:inset 0 0 0 1px #fff"></div><svg class="a" style="left:196px;top:241px" width="26" height="21"><path d="M13 5v12M7 11h12" stroke="#5b8fd6" stroke-width="3"/></svg>
<div class="a" style="left:12px;top:274px;width:208px;height:22px;background:linear-gradient(#ebebeb,#dcdcdc 50%,#cbcbcb);border-bottom:1px solid #a9b0b8"></div><div class="t b" style="left:17px;top:278px;font-size:11.5px">Current Section &amp; Extreme</div><svg class="a" style="left:206px;top:279px" width="10" height="10"><path d="M1 5l4-4 4 4M1 9l4-4 4 4" fill="none" stroke="#222" stroke-width="1.3"/></svg>
<div class="a" style="left:11px;top:298px;width:209px;height:180px;border:1px solid #a9acb2;background:#fff"></div>
<div class="a" style="left:13px;top:432px;width:205px;height:22px;border-radius:3px;background:#f6cd6f"></div>
<div class="t" style="left:23px;top:304px">Cross-section</div>
<div class="t" style="left:23px;top:326px">Prestressing</div>
<div class="t" style="left:23px;top:348px">Design Member</div>
<div class="t" style="left:23px;top:370px">Internal Forces</div>
<div class="t" style="left:23px;top:392px">Reinforcement</div>
<div class="t" style="left:23px;top:414px">Calculation Control</div>
<div class="t" style="left:23px;top:436px">Results</div>
<div class="t" style="left:23px;top:458px">Report</div>
<div class="a" style="left:12px;top:483px;width:208px;height:22px;background:linear-gradient(#ebebeb,#dcdcdc 50%,#cbcbcb);border-bottom:1px solid #a9b0b8"></div><div class="t b" style="left:17px;top:487px;font-size:11.5px">Project Summary</div><svg class="a" style="left:206px;top:488px" width="10" height="10"><path d="M1 5l4-4 4 4M1 9l4-4 4 4" fill="none" stroke="#222" stroke-width="1.3"/></svg>
<div class="a" style="left:11px;top:507px;width:209px;height:91px;border:1px solid #a9acb2;background:#fff"></div>
<div class="t" style="left:23px;top:513.0px">Sections</div>
<div class="t" style="left:23px;top:534.7px">Design Members</div>
<div class="t" style="left:23px;top:556.4px">Reinforced Cross-Sections</div>
<div class="t" style="left:23px;top:578.1px">Materials</div>


<!-- INFO PANEL -->
<div class="a" style="left:1553px;top:144px;width:370px;height:978px;border:1px solid #a3a3a3;border-top:1px solid #9a9a9a"></div>
<div class="a" style="left:1554px;top:145px;width:365px;height:17px;background:#f0f0f0"></div>
<div class="t" style="left:1557px;top:146px;color:#3c3c3c">Info</div>
<svg class="a" style="left:1872px;top:149px" width="44" height="11"><path d="M1 1.5h8l-4 4.5z" fill="#c9c5ad"/><path d="M17 1h6M18 1v6M22 1v6M16 7h8M20 7v4" stroke="#c9c5ad" stroke-width="1.3" fill="none"/><path d="M32 1l9 9M41 1l-9 9" stroke="#c9c5ad" stroke-width="1.2"/></svg>
<div class="a" style="left:1562px;top:170px;width:350px;height:22px;background:linear-gradient(#ebebeb,#dcdcdc 50%,#cbcbcb);border-bottom:1px solid #a9b0b8"></div><div class="t b" style="left:1567px;top:174px;font-size:11.8px">Project Data</div><svg class="a" style="left:1897px;top:175px" width="10" height="10"><path d="M1 5l4-4 4 4M1 9l4-4 4 4" fill="none" stroke="#222" stroke-width="1.3"/></svg>
<div class="a" style="left:1561px;top:194px;width:351px;height:84px;border:1px solid #a9acb2;background:#fff"></div>
<div class="t" style="left:1563px;top:197px;font-size:11.7px">Project:</div>
<div class="t" style="left:1563px;top:229px;font-size:11.7px">Code:</div>
<div class="t" style="left:1563px;top:245px;font-size:11.7px">National Annex:</div>
<div class="t" style="left:1563px;top:261px;font-size:11.7px">Design Working Life:</div>
<div class="t" style="left:1672px;top:229px;font-size:11.7px">EN 1992-1-1</div>
<div class="t" style="left:1672px;top:245px;font-size:11.7px">EN</div>
<div class="t" style="left:1672px;top:261px;font-size:11.7px">50 years</div>
<div class="a" style="left:1562px;top:286px;width:350px;height:22px;background:linear-gradient(#ebebeb,#dcdcdc 50%,#cbcbcb);border-bottom:1px solid #a9b0b8"></div><div class="t b" style="left:1567px;top:290px;font-size:11.8px">Current section and extreme</div><svg class="a" style="left:1897px;top:291px" width="10" height="10"><path d="M1 5l4-4 4 4M1 9l4-4 4 4" fill="none" stroke="#222" stroke-width="1.3"/></svg>
<div class="a" style="left:1561px;top:310px;width:351px;height:234px;border:1px solid #a9acb2;background:#fff"></div>
<div class="t" style="left:1563px;top:312px;font-size:11.7px">Section:</div><div class="t" style="left:1650px;top:312px;font-size:11.7px">S 1</div>
<div class="t" style="left:1563px;top:328px;font-size:11.7px">Extreme:</div><div class="t" style="left:1650px;top:328px;font-size:11.7px">S 1 - E 1</div>
<div class="t" style="left:1563px;top:344px;font-size:11.7px">Design Member:</div><div class="t" style="left:1650px;top:344px;font-size:11.7px">M 1</div>
<div class="t" style="left:1563px;top:360px;font-size:11.7px">Member Type:</div><div class="t" style="left:1650px;top:360px;font-size:11.7px">Beam</div>
<div class="t" style="left:1563px;top:376px;font-size:11.7px">Exposure Class:</div><div class="t" style="left:1650px;top:376px;font-size:11.7px">XC3, XD1</div>
<svg class="a" style="left:1660px;top:390px" width="150" height="150" viewBox="1660 390 150 150"><circle cx="1730.3" cy="474.3" r="53.4" fill="#f0f0f0" stroke="#000" stroke-width="1"/><circle cx="1730.3" cy="474.3" r="45.4" fill="none" stroke="#707070" stroke-width="3"/><path d="M1671 474.3H1779" stroke="#222" stroke-width="1" stroke-dasharray="9 3 1 3"/><path d="M1730.3 534V427" stroke="#222" stroke-width="1" stroke-dasharray="9 3 1 3"/><path d="M1730.3 410.5L1727.3 427L1733.3 427Z" fill="#000"/><path d="M1795 474.3L1778 470.8L1778 477.8Z" fill="#000"/><circle cx="1773.3" cy="474.3" r="2.2" fill="#8a0000"/><circle cx="1751.8" cy="437.1" r="2.2" fill="#8a0000"/><circle cx="1708.8" cy="437.1" r="2.2" fill="#8a0000"/><circle cx="1687.3" cy="474.3" r="2.2" fill="#8a0000"/><circle cx="1708.8" cy="511.5" r="2.2" fill="#8a0000"/><circle cx="1751.8" cy="511.5" r="2.2" fill="#8a0000"/><text x="1726" y="407" font-family="Liberation Sans, sans-serif" font-size="12.5" fill="#111">z</text><text x="1794" y="477" font-family="Liberation Sans, sans-serif" font-size="12.5" fill="#111">y</text></svg>
<div class="a" style="left:1562px;top:551px;width:350px;height:22px;background:linear-gradient(#ebebeb,#dcdcdc 50%,#cbcbcb);border-bottom:1px solid #a9b0b8"></div><div class="t b" style="left:1567px;top:555px;font-size:11.8px">Current section check</div><svg class="a" style="left:1897px;top:556px" width="10" height="10"><path d="M1 5l4-4 4 4M1 9l4-4 4 4" fill="none" stroke="#222" stroke-width="1.3"/></svg>
<div class="a" style="left:1561px;top:575px;width:351px;height:89px;border:1px solid #a9acb2;background:#fff"></div>
<div class="t" style="left:1566px;top:581px;font-size:11.7px">Current section status:</div><svg class="a" style="left:1683px;top:581px" width="16" height="16"><defs><radialGradient id="gg1691589" cx="0.4" cy="0.3" r="0.8"><stop offset="0" stop-color="#9be07a"/><stop offset="1" stop-color="#3aa12a"/></radialGradient></defs><circle cx="8" cy="8" r="7.3" fill="url(#gg1691589)" stroke="#2f8a22" stroke-width="0.6"/><path d="M4.3 8.2l2.6 2.6 4.8-5" fill="none" stroke="#fff" stroke-width="2"/></svg>
<div class="t" style="left:1566px;top:603px;font-size:11.7px">Current extreme status:</div><svg class="a" style="left:1689px;top:603px" width="16" height="16"><defs><radialGradient id="gg1697611" cx="0.4" cy="0.3" r="0.8"><stop offset="0" stop-color="#9be07a"/><stop offset="1" stop-color="#3aa12a"/></radialGradient></defs><circle cx="8" cy="8" r="7.3" fill="url(#gg1697611)" stroke="#2f8a22" stroke-width="0.6"/><path d="M4.3 8.2l2.6 2.6 4.8-5" fill="none" stroke="#fff" stroke-width="2"/></svg>
<div class="a" style="left:1564px;top:622px;width:346px;height:40px;border:1px solid #bccbe0;background:#ebebeb"></div>
<div class="a" style="left:1565px;top:623px;width:207px;height:18px;background:linear-gradient(#f7f7f7,#e4e4e4 50%,#d7d7d7);border-bottom:1px solid #c3c3c3"></div>
<div class="a" style="left:1772px;top:640px;width:137px;height:1px;background:#c3c3c3"></div>
<div class="a" style="left:1683px;top:623px;width:1px;height:18px;background:#c8c8c8"></div><div class="a" style="left:1735px;top:623px;width:1px;height:18px;background:#c8c8c8"></div><div class="a" style="left:1771px;top:623px;width:1px;height:18px;background:#c8c8c8"></div>
<div class="t" style="left:1609px;top:624px;font-size:11.7px">Check</div><div class="t" style="left:1695px;top:624px;font-size:11.7px">Value</div><div class="t" style="left:1737px;top:624px;font-size:11.7px">Status</div>
<div class="t" style="left:1572px;top:644px;font-size:11.7px">Shear</div><div class="t" style="left:1689px;top:644px;font-size:11.7px">63.9</div><svg class="a" style="left:1745px;top:643px" width="16" height="16"><defs><radialGradient id="gg1753651" cx="0.4" cy="0.3" r="0.8"><stop offset="0" stop-color="#9be07a"/><stop offset="1" stop-color="#3aa12a"/></radialGradient></defs><circle cx="8" cy="8" r="7.3" fill="url(#gg1753651)" stroke="#2f8a22" stroke-width="0.6"/><path d="M4.3 8.2l2.6 2.6 4.8-5" fill="none" stroke="#fff" stroke-width="2"/></svg>
<div class="a" style="left:1562px;top:672px;width:350px;height:22px;background:linear-gradient(#ebebeb,#dcdcdc 50%,#cbcbcb);border-bottom:1px solid #a9b0b8"></div><div class="t b" style="left:1567px;top:676px;font-size:11.8px">Current extreme forces</div><svg class="a" style="left:1897px;top:677px" width="10" height="10"><path d="M1 5l4-4 4 4M1 9l4-4 4 4" fill="none" stroke="#222" stroke-width="1.3"/></svg>
<div class="a" style="left:1561px;top:696px;width:351px;height:126px;border:1px solid #a9acb2;background:#fff"></div>
<div class="t" style="left:1568px;top:704px;width:87px;text-align:right;font-size:11.7px">ULS</div>
<div class="t" style="left:1568px;top:720px;font-size:11.7px">N [kN]</div><div class="t" style="left:1600px;top:720px;width:55px;text-align:right;font-size:11.7px">-75.0</div>
<div class="t" style="left:1568px;top:736px;font-size:11.7px">My [kNm]</div><div class="t" style="left:1600px;top:736px;width:55px;text-align:right;font-size:11.7px">10.0</div>
<div class="t" style="left:1568px;top:752px;font-size:11.7px">Mz [kNm]</div><div class="t" style="left:1600px;top:752px;width:55px;text-align:right;font-size:11.7px">0.0</div>
<div class="t" style="left:1568px;top:768px;font-size:11.7px">Vy [kN]</div><div class="t" style="left:1600px;top:768px;width:55px;text-align:right;font-size:11.7px">0.0</div>
<div class="t" style="left:1568px;top:784px;font-size:11.7px">Vz [kN]</div><div class="t" style="left:1600px;top:784px;width:55px;text-align:right;font-size:11.7px">50.0</div>
<div class="t" style="left:1568px;top:800px;font-size:11.7px">T [kNm]</div><div class="t" style="left:1600px;top:800px;width:55px;text-align:right;font-size:11.7px">0.0</div>


</body></html>
